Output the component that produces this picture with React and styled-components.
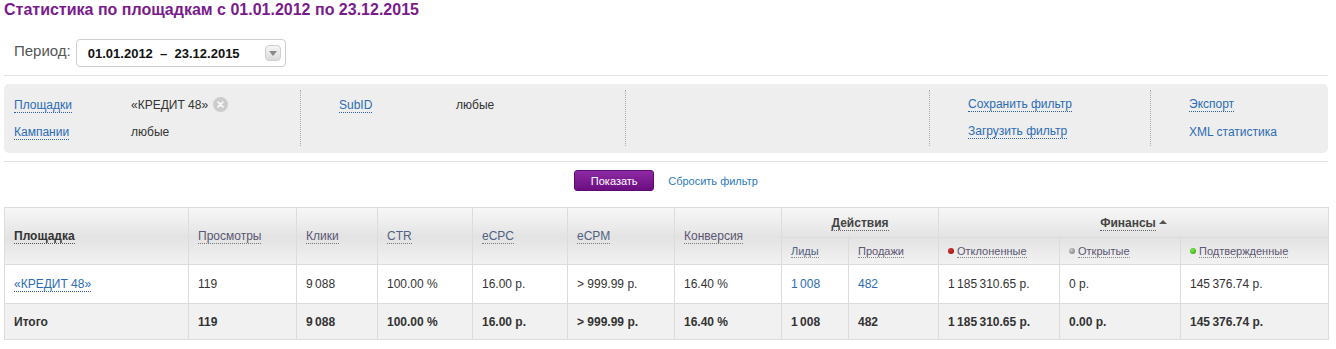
import React from 'react';
import styled, { createGlobalStyle } from 'styled-components';

const GlobalStyle = createGlobalStyle`
  body {
    margin: 0;
    background: #fff;
    font-family: 'Liberation Sans', Arial, sans-serif;
    font-size: 12px;
    color: #333;
  }
`;

const Page = styled.div`
  padding: 0 8px 0 4px;
`;

const Title = styled.h1`
  margin: 0;
  font-size: 16px;
  line-height: 20px;
  font-weight: bold;
  color: #7a1b8c;
`;

const PeriodRow = styled.div`
  display: flex;
  align-items: center;
  gap: 5px;
  margin-top: 19px;
  padding-left: 10px;
`;

const PeriodLabel = styled.span`
  font-size: 15px;
  color: #555;
  margin-top: -5px;
`;

const DateSelect = styled.div`
  display: flex;
  align-items: center;
  justify-content: space-between;
  box-sizing: border-box;
  width: 210px;
  height: 28px;
  padding: 0 4px 0 11px;
  border: 1px solid #cfcfcf;
  border-radius: 4px;
  background: #fff;
  font-size: 13px;
  font-weight: bold;
  color: #111;
  white-space: pre;
`;

const DropButton = styled.span`
  display: flex;
  align-items: center;
  justify-content: center;
  width: 14px;
  height: 14px;
  border: 1px solid #cfcfcf;
  border-radius: 4px;
  background: linear-gradient(#f4f4f4, #dcdcdc);
`;

const Rule = styled.div`
  height: 1px;
  background: #e2e2e2;
  margin-top: 8px;
`;

const FilterBox = styled.div`
  display: flex;
  margin-top: 8px;
  height: 69px;
  background: #eeeeee;
  border-radius: 5px;
`;

const FilterCol = styled.div`
  width: ${p => p.$w}px;
  flex: ${p => (p.$grow ? 1 : 'none')};
  padding: 7px 0 0 ${p => p.$pad}px;
  box-sizing: border-box;
  display: flex;
  flex-direction: column;
`;

const FilterLine = styled.div`
  display: flex;
  align-items: center;
  height: 27px;
`;

const FilterLabel = styled.span`
  width: 117px;
  flex: none;
`;

const DottedLink = styled.span`
  color: ${p => p.$color || '#2b6cb5'};
  border-bottom: 1px dotted ${p => p.$line || '#2b5fa0'};
  line-height: 14px;
  font-weight: ${p => (p.$bold ? 'bold' : 'inherit')};
  cursor: pointer;
`;

const PlainLink = styled.span`
  color: #2b6cb5;
`;

const Value = styled.span`
  display: inline-flex;
  align-items: center;
  gap: 5px;
  color: #333;
`;

const ClearIcon = styled.span`
  display: inline-flex;
  align-items: center;
  justify-content: center;
  width: 15px;
  height: 15px;
  border-radius: 50%;
  background: #cccccc;
`;

const Separator = styled.div`
  width: 0;
  border-left: 1px dotted #aaa;
  margin: 6px 0 7px;
`;

const Actions = styled.div`
  display: flex;
  justify-content: center;
  align-items: center;
  gap: 14px;
  margin-top: 8px;
  height: 21px;
`;

const ShowButton = styled.button`
  width: 80px;
  height: 21px;
  border: 1px solid #5e0c72;
  border-radius: 3px;
  background: linear-gradient(#8e2aa3, #6b0d80);
  color: #fff;
  font-family: 'Liberation Sans', Arial, sans-serif;
  font-size: 11px;
  padding: 0;
`;

const ResetLink = styled.span`
  color: #2b7ac0;
  font-size: 11px;
`;

const Table = styled.table`
  width: 100%;
  margin-top: 16px;
  border-collapse: collapse;
  table-layout: fixed;
  border: 1px solid #dcdcdc;
`;

const Head = styled.thead`
  background: linear-gradient(#f7f7f7 0%, #e3e3e3 52%, #f2f2f2 100%);
`;

const Th = styled.th`
  border: 1px solid #dcdcdc;
  font-weight: normal;
  text-align: ${p => (p.$center ? 'center' : 'left')};
  padding: 0 9px;
  height: ${p => p.$h || 27}px;
  font-size: ${p => (p.$small ? '11px' : '12px')};
  vertical-align: middle;
  white-space: nowrap;
`;

const Td = styled.td`
  border: 1px solid #dcdcdc;
  padding: 0 9px;
  height: ${p => p.$h}px;
  font-weight: ${p => (p.$bold ? 'bold' : 'normal')};
  color: ${p => (p.$blue ? '#2b6cb5' : '#333')};
  white-space: nowrap;
`;

const BodyRow = styled.tr`
  background: ${p => p.$bg};
`;

const Dot = styled.span`
  display: inline-block;
  width: 6px;
  height: 6px;
  border-radius: 50%;
  background: ${p => p.$c};
  margin-right: 3px;
  vertical-align: 1px;
`;

const Caret = styled.span`
  display: inline-block;
  width: 0;
  height: 0;
  margin-left: 3px;
  border-left: 4px solid transparent;
  border-right: 4px solid transparent;
  border-bottom: 4px solid #555;
  vertical-align: 3px;
`;

const headLabel = '#5b5671';
const headBlue = '#4f6282';
const nb = '\u202F';

const widths = [184, 108, 81, 95, 95, 107, 107, 67, 90, 121, 121, 148];

const rowData = [
  '119',
  `9${nb}088`,
  '100.00 %',
  '16.00 р.',
  '> 999.99 р.',
  '16.40 %',
  `1${nb}008`,
  '482',
  `1${nb}185${nb}310.65 р.`,
];

const columns = [
  { label: 'Просмотры', color: headLabel },
  { label: 'Клики', color: headLabel },
  { label: 'CTR', color: headBlue },
  { label: 'eCPC', color: headBlue },
  { label: 'eCPM', color: headBlue },
  { label: 'Конверсия', color: headLabel },
];

const subColumns = [
  { label: 'Лиды', color: headBlue },
  { label: 'Продажи', color: headLabel },
  { label: 'Отклоненные', color: headLabel, dot: 'radial-gradient(circle at 35% 35%, #d33, #8a0a0a)' },
  { label: 'Открытые', color: headLabel, dot: 'radial-gradient(circle at 35% 35%, #ccc, #777)' },
  { label: 'Подтвержденные', color: headLabel, dot: 'radial-gradient(circle at 35% 35%, #7e4, #2a9a10)' },
];

export default function App() {
  return (
    <Page>
      <GlobalStyle />
      <Title>Статистика по площадкам с 01.01.2012 по 23.12.2015</Title>

      <PeriodRow>
        <PeriodLabel>Период:</PeriodLabel>
        <DateSelect>
          <span>01.01.2012  –  23.12.2015</span>
          <DropButton>
            <svg width="8" height="5" viewBox="0 0 8 5"><path d="M0 0h8L4 5z" fill="#8a8a8a" /></svg>
          </DropButton>
        </DateSelect>
      </PeriodRow>

      <Rule />

      <FilterBox>
        <FilterCol $w={296} $pad={10}>
          <FilterLine>
            <FilterLabel><DottedLink>Площадки</DottedLink></FilterLabel>
            <Value>
              «КРЕДИТ 48»
              <ClearIcon>
                <svg width="7" height="7" viewBox="0 0 7 7"><path d="M1 1l5 5M6 1L1 6" stroke="#fff" strokeWidth="1.6" strokeLinecap="round" /></svg>
              </ClearIcon>
            </Value>
          </FilterLine>
          <FilterLine>
            <FilterLabel><DottedLink>Кампании</DottedLink></FilterLabel>
            <Value>любые</Value>
          </FilterLine>
        </FilterCol>
        <Separator />
        <FilterCol $w={324} $pad={38}>
          <FilterLine>
            <FilterLabel><DottedLink>SubID</DottedLink></FilterLabel>
            <Value>любые</Value>
          </FilterLine>
        </FilterCol>
        <Separator />
        <FilterCol $w={303} $pad={0} />
        <Separator />
        <FilterCol $w={220} $pad={38}>
          <FilterLine><DottedLink>Сохранить фильтр</DottedLink></FilterLine>
          <FilterLine><DottedLink>Загрузить фильтр</DottedLink></FilterLine>
        </FilterCol>
        <Separator />
        <FilterCol $grow $pad={38}>
          <FilterLine><DottedLink>Экспорт</DottedLink></FilterLine>
          <FilterLine><PlainLink>XML статистика</PlainLink></FilterLine>
        </FilterCol>
      </FilterBox>

      <Rule />

      <Actions>
        <ShowButton>Показать</ShowButton>
        <ResetLink>Сбросить фильтр</ResetLink>
      </Actions>

      <Table>
        <colgroup>
          {widths.map((w, i) => <col key={i} style={{ width: w }} />)}
        </colgroup>
        <Head>
          <tr>
            <Th rowSpan={2}><DottedLink $color="#333" $line="#555" $bold>Площадка</DottedLink></Th>
            {columns.map(c => (
              <Th key={c.label} rowSpan={2}><DottedLink $color={c.color} $line="#777">{c.label}</DottedLink></Th>
            ))}
            <Th colSpan={2} $center $h={29}><DottedLink $color="#444" $line="#666" $bold>Действия</DottedLink></Th>
            <Th colSpan={3} $center $h={29}>
              <DottedLink $color="#444" $line="#666" $bold>Финансы</DottedLink>
              <Caret />
            </Th>
          </tr>
          <tr>
            {subColumns.map(c => (
              <Th key={c.label} $small $h={26}>
                {c.dot && <Dot $c={c.dot} />}
                <DottedLink $color={c.color} $line="#888">{c.label}</DottedLink>
              </Th>
            ))}
          </tr>
        </Head>
        <tbody>
          <BodyRow $bg="#fff">
            <Td $h={38}><DottedLink>«КРЕДИТ 48»</DottedLink></Td>
            {rowData.map((v, i) => (
              <Td key={i} $h={38} $blue={i === 6 || i === 7}>{v}</Td>
            ))}
            <Td $h={38}>0 р.</Td>
            <Td $h={38}>{`145${nb}376.74 р.`}</Td>
          </BodyRow>
          <BodyRow $bg="#f1f1f1">
            <Td $h={35} $bold>Итого</Td>
            {rowData.map((v, i) => (
              <Td key={i} $h={35} $bold>{v}</Td>
            ))}
            <Td $h={35} $bold>0.00 р.</Td>
            <Td $h={35} $bold>{`145${nb}376.74 р.`}</Td>
          </BodyRow>
        </tbody>
      </Table>
    </Page>
  );
}
